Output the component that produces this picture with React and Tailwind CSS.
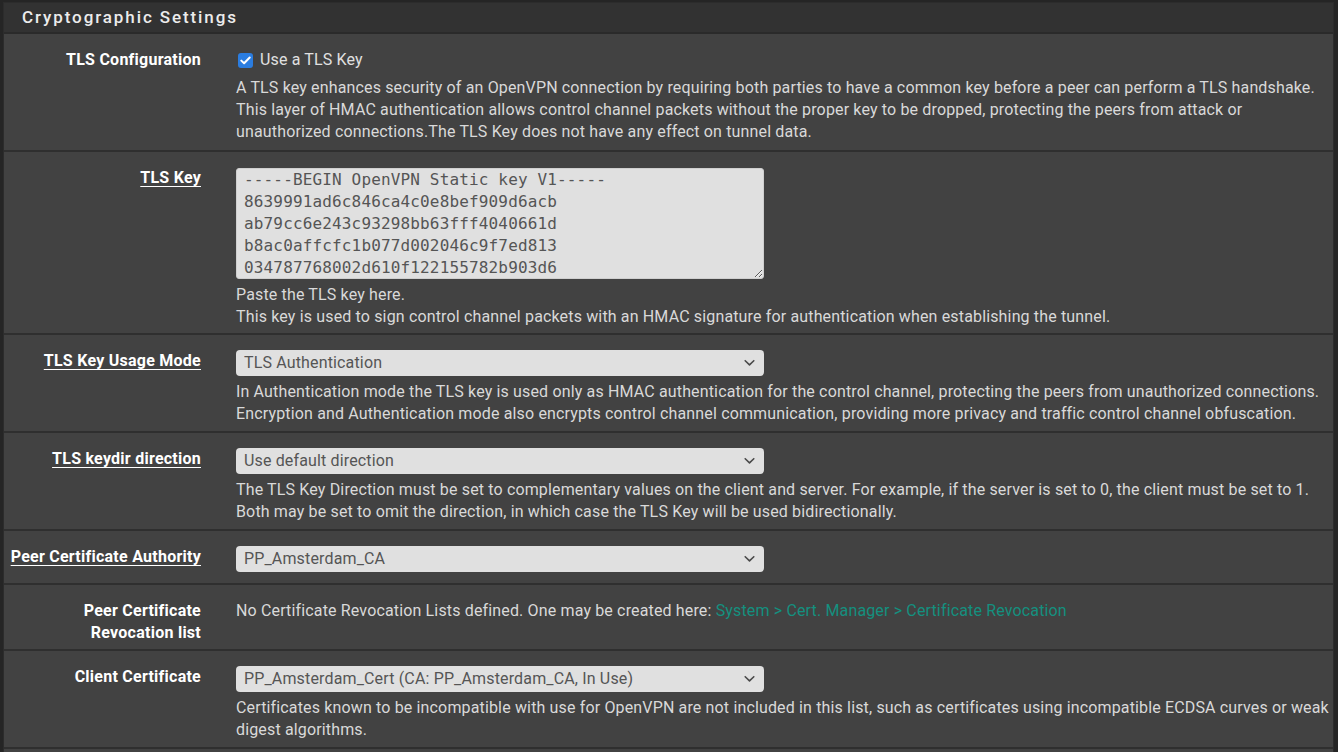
import React from "react";

const font = { fontFamily: "Roboto, 'Noto Sans', sans-serif" };

function Chevron() {
  return (
    <svg className="pointer-events-none absolute right-[9px] top-1/2 -translate-y-1/2" width="11" height="7" viewBox="0 0 11 7" fill="none">
      <path d="M1.2 1.2 L5.5 5.4 L9.8 1.2" stroke="#4a4a4a" strokeWidth="1.6" strokeLinecap="round" strokeLinejoin="round" />
    </svg>
  );
}

function Select({ value }) {
  return (
    <div className="relative w-[528px] h-[26px]">
      <select
        defaultValue={value}
        className="appearance-none w-full h-full rounded-[4px] bg-[#e0e0e0] text-[#555] text-[16px] tracking-[0.15px] leading-[26px] pl-[8px] pr-[24px] outline-none border-0"
        style={font}
      >
        <option>{value}</option>
      </select>
      <Chevron />
    </div>
  );
}

function Row({ label, underline, children, pb = "pb-[6px]" }) {
  return (
    <div className={`flex bg-[#424242] border-b-2 border-[#2f2f2f] pt-[15px] ${pb}`}>
      <div className="w-[212px] shrink-0 pl-[5px] pr-[15px] text-right leading-[22px]">
        <span className={`text-white font-bold text-[16px] tracking-[0.25px] leading-[22px] ${underline ? "underline underline-offset-[3px] decoration-1" : ""}`}>
          {label}
        </span>
      </div>
      <div className="flex-1 pl-[20px] pr-[4px] text-[#d9d9d9] text-[16px] tracking-[0.15px] leading-[22px]">{children}</div>
    </div>
  );
}

const keyText = `-----BEGIN OpenVPN Static key V1-----
8639991ad6c846ca4c0e8bef909d6acb
ab79cc6e243c93298bb63fff4040661d
b8ac0affcfc1b077d002046c9f7ed813
034787768002d610f122155782b903d6
5a1c2e7d8f0b3c4e6a9d1f2b3c4d5e6f
-----END OpenVPN Static key V1-----`;

export default function App() {
  return (
    <div className="h-[752px] overflow-hidden bg-[#252525] pt-[2px] pl-[3px]" style={font}>
      <div className="w-[1331px] border border-[#2c2c2c] bg-[#424242]">
        <div className="h-[31px] bg-[#323232] border-b-2 border-[#2a2a2a] pl-[18px] flex items-center">
          <h2 className="text-[#ececec] text-[17px] font-medium tracking-[1.9px]">Cryptographic Settings</h2>
        </div>

        <Row label="TLS Configuration" pb="pb-[7px]">
          <label className="flex items-center h-[22px]">
            <span className="w-[15px] h-[15px] ml-[2px] rounded-[3px] bg-[#2b7de0] flex items-center justify-center">
              <svg width="11" height="9" viewBox="0 0 11 9" fill="none">
                <path d="M1.3 4.6 L4.1 7.3 L9.7 1.5" stroke="white" strokeWidth="2" strokeLinecap="round" strokeLinejoin="round" />
              </svg>
            </span>
            <span className="ml-[7px] text-[#e0e0e0]">Use a TLS Key</span>
          </label>
          <p className="mt-[6px]">
            A TLS key enhances security of an OpenVPN connection by requiring both parties to have a common key before a peer can perform a TLS handshake. This layer of HMAC authentication allows control channel packets without the proper key to be dropped, protecting the peers from attack or unauthorized connections.The TLS Key does not have any effect on tunnel data.
          </p>
        </Row>

        <Row label="TLS Key" underline pb="pb-[5px]">
          <textarea
            readOnly
            value={keyText}
            className="block w-[528px] h-[111px] mt-[1px] rounded-[3px] bg-[#e0e0e0] text-[#555] border border-[#cfcfcf] px-[7px] py-0 text-[16px] tracking-[0.15px] leading-[22px] overflow-hidden resize outline-none"
            style={{ fontFamily: "'DejaVu Sans Mono', monospace" }}
          />
          <p className="mt-[5px]">Paste the TLS key here.</p>
          <p>This key is used to sign control channel packets with an HMAC signature for authentication when establishing the tunnel.</p>
        </Row>

        <Row label="TLS Key Usage Mode" underline>
          <Select value="TLS Authentication" />
          <p className="mt-[5px]">
            In Authentication mode the TLS key is used only as HMAC authentication for the control channel, protecting the peers from unauthorized connections. Encryption and Authentication mode also encrypts control channel communication, providing more privacy and traffic control channel obfuscation.
          </p>
        </Row>

        <Row label="TLS keydir direction" underline>
          <Select value="Use default direction" />
          <p className="mt-[5px]">
            The TLS Key Direction must be set to complementary values on the client and server. For example, if the server is set to 0, the client must be set to 1. Both may be set to omit the direction, in which case the TLS Key will be used bidirectionally.
          </p>
        </Row>

        <Row label="Peer Certificate Authority" underline pb="pb-[11px]">
          <Select value="PP_Amsterdam_CA" />
        </Row>

        <Row label="Peer Certificate Revocation list" pb="pb-[5px]">
          <p>
            No Certificate Revocation Lists defined. One may be created here:{" "}
            <a className="text-[#14907f]">System &gt; Cert. Manager &gt; Certificate Revocation</a>
          </p>
        </Row>

        <Row label="Client Certificate">
          <Select value="PP_Amsterdam_Cert (CA: PP_Amsterdam_CA, In Use)" />
          <p className="mt-[5px]">
            Certificates known to be incompatible with use for OpenVPN are not included in this list, such as certificates using incompatible ECDSA curves or weak digest algorithms.
          </p>
        </Row>

        <div className="h-[40px] bg-[#424242]" />
      </div>
    </div>
  );
}
